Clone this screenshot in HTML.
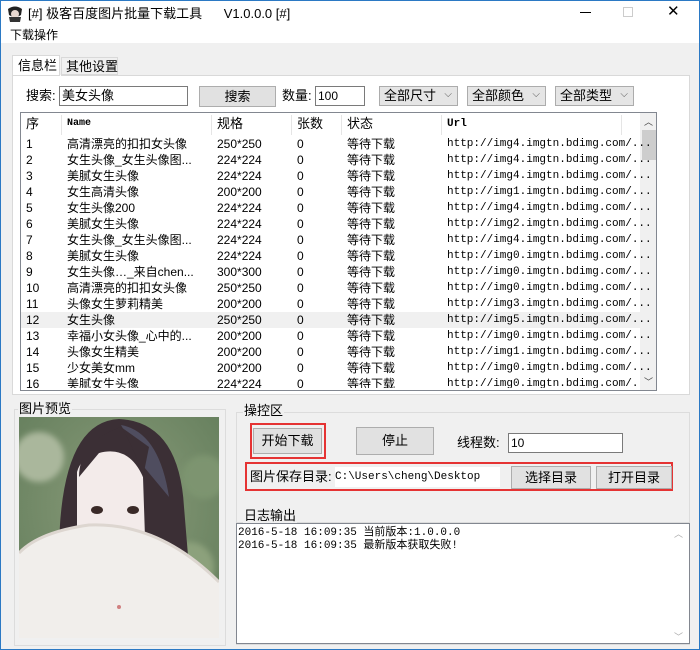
<!DOCTYPE html>
<html><head><meta charset="utf-8"><style>
*{margin:0;padding:0;box-sizing:border-box}
body{width:700px;height:650px;background:#f0f0f0;font:12px/14px "Liberation Sans","Noto Sans CJK SC",sans-serif;color:#000;position:relative;overflow:hidden}
.a{position:absolute;white-space:nowrap}
.btn{position:absolute;background:#e1e1e1;border:1px solid #adadad;text-align:center;font-size:13px}
.inp{position:absolute;background:#fff;border:1px solid #7a7a7a;padding-left:2px}
.sel{position:absolute;background:#e5e5e5;border:1px solid #acacac;font-size:13px;padding-left:4px;line-height:18px}
.sel:after{content:"⌵";position:absolute;right:5px;top:-1px;font-size:10px;color:#555}
.mono{font-family:"Liberation Mono","Noto Sans CJK SC",monospace;font-size:11px}
.row{position:absolute;left:21px;width:619px;height:16px;line-height:16px;font-size:12px}
.row span{position:absolute}
.grp{position:absolute;border:1px solid #dcdcdc}
.red{position:absolute;border:2px solid #e53333}
</style></head><body>
<div class="a" style="left:0;top:0;width:700px;height:650px;border:1px solid #2b79c4"></div>
<div class="a" style="left:1px;top:1px;width:698px;height:42px;background:#fff"></div>
<svg class="a" style="left:6px;top:5px" width="18" height="18"><path d="M2 4 Q9 -1 16 4 L15 10 Q9 14 3 10Z" fill="#222"/><circle cx="9" cy="9" r="4" fill="#e8d8d0"/><path d="M3 12 L15 12 L14 17 L4 17Z" fill="#333"/></svg>
<div class="a" style="left:28px;top:7px;font-size:13px">[#] 极客百度图片批量下载工具&nbsp;&nbsp;&nbsp;&nbsp;&nbsp; V1.0.0.0 [#]</div>
<div class="a" style="left:580px;top:12px;width:11px;height:1px;background:#000"></div>
<div class="a" style="left:623px;top:7px;width:10px;height:10px;border:1px solid #ccc"></div>
<div class="a" style="left:667px;top:4px;font-size:15px;line-height:16px">✕</div>
<div class="a" style="left:10px;top:28px;font-size:12px">下载操作</div>
<div class="a" style="left:12px;top:55px;width:48px;height:21px;background:#fff;border:1px solid #d9d9d9;border-bottom:none;padding:3px 0 0 5px;font-size:13px">信息栏</div>
<div class="a" style="left:61px;top:57px;width:57px;height:18px;background:#f0f0f0;border:1px solid #d9d9d9;padding:2px 0 0 4px;font-size:13px">其他设置</div>
<div class="a" style="left:12px;top:75px;width:678px;height:320px;background:#fff;border:1px solid #d9d9d9"></div>
<div class="a" style="left:60px;top:75px;width:1px;height:1px;background:#fff"></div>
<div class="a" style="left:26px;top:89px;font-size:13px">搜索:</div>
<div class="inp" style="left:59px;top:86px;width:129px;height:20px;font-size:13px;line-height:18px">美女头像</div>
<div class="btn" style="left:199px;top:86px;width:77px;height:21px;line-height:19px">搜索</div>
<div class="a" style="left:282px;top:89px;font-size:13px">数量:</div>
<div class="inp" style="left:315px;top:86px;width:50px;height:20px;line-height:18px">100</div>
<div class="sel" style="left:379px;top:86px;width:79px;height:20px">全部尺寸</div>
<div class="sel" style="left:467px;top:86px;width:79px;height:20px">全部颜色</div>
<div class="sel" style="left:555px;top:86px;width:79px;height:20px">全部类型</div>
<div class="a" style="left:20px;top:112px;width:637px;height:279px;border:1px solid #828790;background:#fff;overflow:hidden">
 <div class="a" style="left:0;top:0;width:620px;height:22px;font-size:13px;line-height:22px">
  <span class="a" style="left:5px">序</span><span class="a mono" style="left:46px;font-size:10px;font-weight:bold">Name</span>
  <span class="a" style="left:196px">规格</span><span class="a" style="left:276px">张数</span>
  <span class="a" style="left:326px">状态</span><span class="a mono" style="left:426px;font-weight:bold">Url</span>
  <div class="a" style="left:40px;top:2px;width:1px;height:20px;background:#e5e5e5"></div>
  <div class="a" style="left:190px;top:2px;width:1px;height:20px;background:#e5e5e5"></div>
  <div class="a" style="left:270px;top:2px;width:1px;height:20px;background:#e5e5e5"></div>
  <div class="a" style="left:320px;top:2px;width:1px;height:20px;background:#e5e5e5"></div>
  <div class="a" style="left:420px;top:2px;width:1px;height:20px;background:#e5e5e5"></div>
  <div class="a" style="left:600px;top:2px;width:1px;height:20px;background:#e5e5e5"></div>
 </div>
 <div class="a" style="left:619px;top:0;width:17px;height:277px;background:#f0f0f0"></div>
 <div class="a" style="left:623px;top:2px;font-size:9px;color:#444">︿</div>
 <div class="a" style="left:621px;top:17px;width:14px;height:30px;background:#cdcdcd"></div>
 <div class="a" style="left:623px;top:262px;font-size:9px;color:#444">﹀</div>
</div>
<div id="rows"></div>
<script>
var d=[["高清漂亮的扣扣女头像","250*250","4"],["女生头像_女生头像图...","224*224","4"],["美腻女生头像","224*224","4"],["女生高清头像","200*200","1"],["女生头像200","224*224","4"],["美腻女生头像","224*224","2"],["女生头像_女生头像图...","224*224","4"],["美腻女生头像","224*224","0"],["女生头像…_来自chen...","300*300","0"],["高清漂亮的扣扣女头像","250*250","0"],["头像女生萝莉精美","200*200","3"],["女生头像","250*250","5"],["幸福小女头像_心中的...","200*200","0"],["头像女生精美","200*200","1"],["少女美女mm","200*200","0"],["美腻女生头像","224*224","0"]];
var h="";for(var i=0;i<16;i++){var t=136+i*16;h+='<div class="row" style="top:'+t+'px;'+(i==11?'background:#f0f0f0;':'')+(i==15?'height:12px;overflow:hidden;':'')+'"><span style="left:5px">'+(i+1)+'</span><span style="left:46px">'+d[i][0]+'</span><span style="left:196px">'+d[i][1]+'</span><span style="left:276px">0</span><span style="left:326px">等待下载</span><span class="mono" style="left:426px">http://img'+d[i][2]+'.imgtn.bdimg.com/...</span></div>';}
document.getElementById("rows").innerHTML=h;
</script>
<div class="grp" style="left:14px;top:409px;width:212px;height:237px"></div>
<div class="a" style="left:18px;top:402px;background:#f0f0f0;font-size:13px;padding:0 1px">图片预览</div>
<svg class="a" style="left:19px;top:417px" width="200" height="221">
<defs><radialGradient id="bg" cx="0.5" cy="0.4" r="0.8"><stop offset="0" stop-color="#8a9c7a"/><stop offset="1" stop-color="#5f7a58"/></radialGradient>
<filter id="b"><feGaussianBlur stdDeviation="3"/></filter></defs>
<rect width="200" height="221" fill="url(#bg)"/>
<circle cx="20" cy="40" r="25" fill="#aab79c" filter="url(#b)"/><circle cx="185" cy="60" r="22" fill="#7d9470" filter="url(#b)"/><circle cx="170" cy="150" r="25" fill="#8ca17c" filter="url(#b)"/>
<path d="M40 150 Q38 5 100 2 Q160 5 165 90 L172 175 L38 175Z" fill="#3b2f35"/>
<path d="M102 8 Q140 15 150 80 L125 50Z" fill="#585a72" opacity="0.7"/>
<path d="M58 55 Q62 40 80 36 Q110 28 124 60 L126 120 Q95 130 58 120Z" fill="#f3ebea"/>
<path d="M102 10 Q95 30 80 36 L60 60 Q60 25 102 10Z" fill="#3b2f35"/>
<path d="M102 10 Q115 30 124 60 L130 30Z" fill="#3b2f35"/>
<ellipse cx="78" cy="93" rx="6" ry="4" fill="#3a2a28"/><ellipse cx="114" cy="93" rx="6" ry="4" fill="#3a2a28"/>
<path d="M0 136 Q20 115 70 108 Q140 105 200 165 L200 221 L0 221Z" fill="#f1eeeb"/>
<path d="M0 136 Q20 115 70 108 Q140 105 200 165" stroke="#ddd6d0" stroke-width="3" fill="none"/>
<circle cx="100" cy="190" r="2" fill="#d08080"/>
</svg>
<div class="grp" style="left:236px;top:412px;width:454px;height:125px"></div>
<div class="a" style="left:243px;top:404px;background:#f0f0f0;font-size:13px;padding:0 1px">操控区</div>
<div class="btn" style="left:253px;top:428px;width:69px;height:26px;line-height:24px">开始下载</div>
<div class="red" style="left:250px;top:423px;width:76px;height:36px"></div>
<div class="btn" style="left:356px;top:427px;width:78px;height:28px;line-height:26px">停止</div>
<div class="a" style="left:457px;top:436px;font-size:13px">线程数:</div>
<div class="inp" style="left:508px;top:433px;width:115px;height:20px;line-height:18px">10</div>
<div class="red" style="left:245px;top:462px;width:428px;height:29px"></div>
<div class="a" style="left:250px;top:470px;font-size:13px">图片保存目录:</div>
<div class="a mono" style="left:335px;top:467px;width:165px;height:20px;background:#fff;line-height:20px">C:\Users\cheng\Desktop</div>
<div class="btn" style="left:511px;top:466px;width:80px;height:23px;line-height:21px">选择目录</div>
<div class="btn" style="left:596px;top:466px;width:76px;height:23px;line-height:21px">打开目录</div>
<div class="grp" style="left:236px;top:522px;width:454px;height:123px"></div>
<div class="a" style="left:243px;top:509px;background:#f0f0f0;font-size:13px;padding:0 1px">日志输出</div>
<div class="a mono" style="left:236px;top:523px;width:454px;height:121px;background:#fff;border:1px solid #828790;line-height:13px;padding:3px 0 0 1px">2016-5-18 16:09:35 当前版本:1.0.0.0<br>2016-5-18 16:09:35 最新版本获取失败!</div>
<div class="a" style="left:674px;top:527px;font-size:9px;color:#aaa">︿</div>
<div class="a" style="left:674px;top:630px;font-size:9px;color:#aaa">﹀</div>
</body></html>
